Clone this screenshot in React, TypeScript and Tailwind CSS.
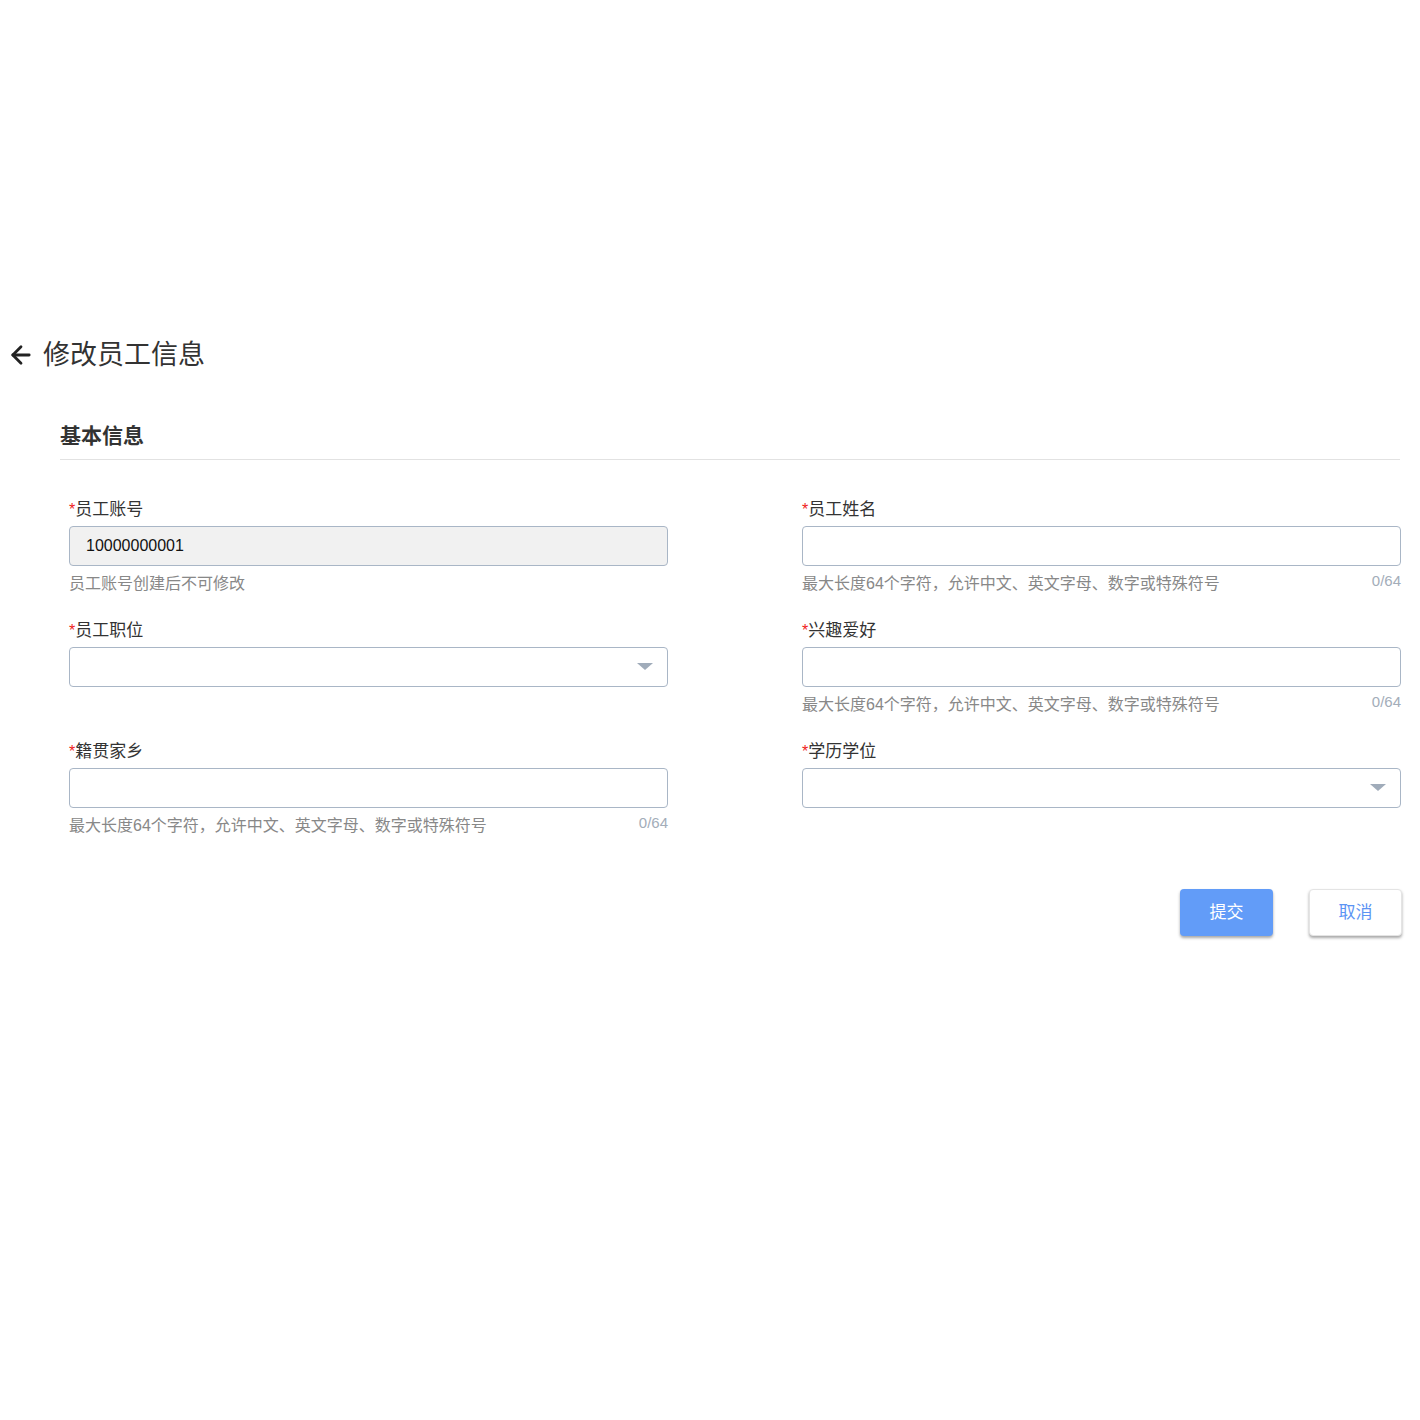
import { ArrowLeft } from "lucide-react";

const HINT = "最大长度64个字符，允许中文、英文字母、数字或特殊符号";

function Label({ text }: { text: string }) {
  return (
    <div className="h-6 text-[17px] leading-6 text-[#333]">
      <span className="text-[16px] text-[#f01c1c]">*</span>
      {text}
    </div>
  );
}

function TextField({ label, hint, count }: { label: string; hint?: string; count?: boolean }) {
  return (
    <div>
      <Label text={label} />
      <div className="mt-1 h-10 rounded border border-[#a9b6c6] bg-white" />
      {hint && (
        <div className="mt-[7px] flex items-start justify-between text-[16px] leading-[22px] text-[#888]">
          <span>{hint}</span>
          {count && <span className="-mt-[3px] text-[15px] text-[#a3adb9]">0/64</span>}
        </div>
      )}
    </div>
  );
}

function SelectField({ label }: { label: string }) {
  return (
    <div>
      <Label text={label} />
      <div className="mt-1 flex h-10 items-center justify-end rounded border border-[#a9b6c6] bg-white pr-[14px]">
        <svg width="16" height="8" viewBox="0 0 16 8">
          <path d="M0 0 L16 0 L8 7 Z" fill="#a0acba" />
        </svg>
      </div>
    </div>
  );
}

export default function App() {
  return (
    <div
      className="min-h-[1420px] bg-white pt-[337px]"
      style={{ fontFamily: '"Liberation Sans", "Noto Sans CJK SC", sans-serif' }}
    >
      <div className="flex h-9 items-center pl-[7px]">
        <ArrowLeft size={28} strokeWidth={2.4} className="text-[#222]" />
        <h1 className="ml-[8px] text-[27px] font-normal text-[#333]">修改员工信息</h1>
      </div>

      <section className="ml-[60px] mr-[20px] mt-[49px]">
        <h2 className="h-7 text-[21px] font-bold leading-7 text-[#333]">基本信息</h2>
        <div className="mt-[9px] h-px bg-[#e2e2e2]" />

        <div className="mt-[38px] grid grid-cols-[599px_599px] gap-x-[134px] gap-y-[24px] pl-[9px]">
          <div>
            <Label text="员工账号" />
            <div className="mt-1 flex h-10 items-center rounded border border-[#a9b6c6] bg-[#f1f1f1] pl-4 text-[16px] text-[#111]">
              10000000001
            </div>
            <div className="mt-[7px] text-[16px] leading-[22px] text-[#888]">员工账号创建后不可修改</div>
          </div>
          <TextField label="员工姓名" hint={HINT} count />

          <SelectField label="员工职位" />
          <TextField label="兴趣爱好" hint={HINT} count />

          <TextField label="籍贯家乡" hint={HINT} count />
          <SelectField label="学历学位" />
        </div>

        <div className="-mr-[2px] mt-[52px] flex justify-end gap-[36px]">
          <button className="h-[47px] w-[93px] rounded bg-[#629cf8] text-[17px] text-white shadow-[0_2px_3px_rgba(0,0,0,0.35)]">
            提交
          </button>
          <button className="h-[47px] w-[93px] rounded border border-[#e4e4e4] bg-white text-[17px] text-[#5b94f4] shadow-[0_2px_3px_rgba(0,0,0,0.35)]">
            取消
          </button>
        </div>
      </section>
    </div>
  );
}
